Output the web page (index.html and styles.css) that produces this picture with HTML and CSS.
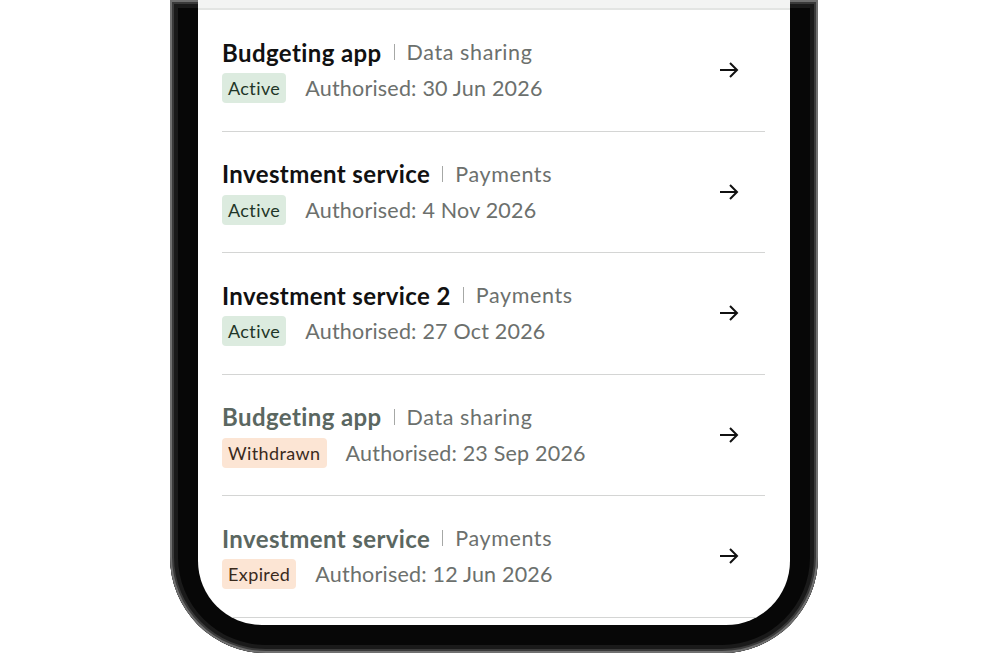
FILE: index.html
```html
<!DOCTYPE html>
<html lang="en">
<head>
    <meta charset="UTF-8">
    <meta name="viewport" content="width=device-width, initial-scale=1.0">
    <title>Connected services</title>
    <link rel="stylesheet" href="styles.css">
</head>
<body>
    <div class="phone">
        <div class="screen">
            <div class="top-band"></div>

            <!-- Consent list -->
            <ul class="consents">
                <li class="consent">
                    <div class="consent-info">
                        <div class="consent-title">
                            <span class="name">Budgeting app</span>
                            <span class="divider"></span>
                            <span class="kind">Data sharing</span>
                        </div>
                        <div class="consent-meta">
                            <span class="badge badge-active">Active</span>
                            <span class="date">Authorised: 30 Jun 2026</span>
                        </div>
                    </div>
                    <svg class="arrow" viewBox="0 0 24 24" width="24" height="24"><path d="M3 12h17M13 5l7 7-7 7"/></svg>
                </li>
                <li class="consent">
                    <div class="consent-info">
                        <div class="consent-title">
                            <span class="name">Investment service</span>
                            <span class="divider"></span>
                            <span class="kind">Payments</span>
                        </div>
                        <div class="consent-meta">
                            <span class="badge badge-active">Active</span>
                            <span class="date">Authorised: 4 Nov 2026</span>
                        </div>
                    </div>
                    <svg class="arrow" viewBox="0 0 24 24" width="24" height="24"><path d="M3 12h17M13 5l7 7-7 7"/></svg>
                </li>
                <li class="consent">
                    <div class="consent-info">
                        <div class="consent-title">
                            <span class="name">Investment service 2</span>
                            <span class="divider"></span>
                            <span class="kind">Payments</span>
                        </div>
                        <div class="consent-meta">
                            <span class="badge badge-active">Active</span>
                            <span class="date">Authorised: 27 Oct 2026</span>
                        </div>
                    </div>
                    <svg class="arrow" viewBox="0 0 24 24" width="24" height="24"><path d="M3 12h17M13 5l7 7-7 7"/></svg>
                </li>
                <li class="consent inactive">
                    <div class="consent-info">
                        <div class="consent-title">
                            <span class="name">Budgeting app</span>
                            <span class="divider"></span>
                            <span class="kind">Data sharing</span>
                        </div>
                        <div class="consent-meta">
                            <span class="badge badge-ended">Withdrawn</span>
                            <span class="date">Authorised: 23 Sep 2026</span>
                        </div>
                    </div>
                    <svg class="arrow" viewBox="0 0 24 24" width="24" height="24"><path d="M3 12h17M13 5l7 7-7 7"/></svg>
                </li>
                <li class="consent inactive">
                    <div class="consent-info">
                        <div class="consent-title">
                            <span class="name">Investment service</span>
                            <span class="divider"></span>
                            <span class="kind">Payments</span>
                        </div>
                        <div class="consent-meta">
                            <span class="badge badge-ended">Expired</span>
                            <span class="date">Authorised: 12 Jun 2026</span>
                        </div>
                    </div>
                    <svg class="arrow" viewBox="0 0 24 24" width="24" height="24"><path d="M3 12h17M13 5l7 7-7 7"/></svg>
                </li>
            </ul>
        </div>
    </div>
</body>
</html>
```

FILE: styles.css
```css
/* General Styles */
body {
    font-family: Lato, 'Noto Sans', sans-serif;
    margin: 0;
    padding: 0;
    background-color: #fff;
    color: #111;
    overflow: hidden;
}

/* Phone frame */
.phone {
    width: 592px;
    margin-left: 170px;
    padding: 0 28px 28px;
    background-color: #070707;
    border-radius: 0 0 96px 96px;
    box-shadow: inset 0 0 0 2px #707070, inset 0 0 0 4px #3a3a3a, inset 0 0 0 8px #1a1a1a;
}

.screen {
    background: #fff;
    border-radius: 0 0 64px 64px;
    padding-bottom: 7.5px;
    overflow: hidden;
}

.top-band {
    height: 8px;
    background: #f3f4f3;
    border-bottom: 2px solid #e3e5e3;
}

/* List */
.consents {
    list-style: none;
    margin: 0;
    padding: 0 25px 0 24px;
}

.consent {
    height: 120.5px;
    display: flex;
    align-items: center;
    justify-content: space-between;
    border-bottom: 1px solid #d4d5d4;
}

.consent-info {
    display: flex;
    flex-direction: column;
    gap: 6px;
}

.consent-title {
    display: flex;
    align-items: center;
    gap: 12px;
    height: 30px;
}

.name {
    font-size: 24px;
    font-weight: bold;
    letter-spacing: 0.4px;
    color: #111;
}

.divider {
    width: 1px;
    height: 16px;
    background: #a6a8a6;
}

.kind {
    font-size: 21.5px;
    letter-spacing: 0.6px;
    color: #6c706d;
}

.consent-meta {
    display: flex;
    align-items: center;
    gap: 19px;
}

.badge {
    height: 30px;
    line-height: 30px;
    padding: 0 6px;
    border-radius: 4px;
    font-size: 18px;
    letter-spacing: 0.4px;
}

.badge-active {
    background: #dcebdf;
    color: #1f3628;
}

.badge-ended {
    background: #fce5d4;
    color: #3a2a1c;
}

.date {
    font-size: 21.5px;
    letter-spacing: 0.2px;
    color: #6c706d;
}

.inactive .name {
    color: #5b6761;
}

.arrow {
    fill: none;
    stroke: #111;
    stroke-width: 2;
    margin-right: 24px;
}
```
